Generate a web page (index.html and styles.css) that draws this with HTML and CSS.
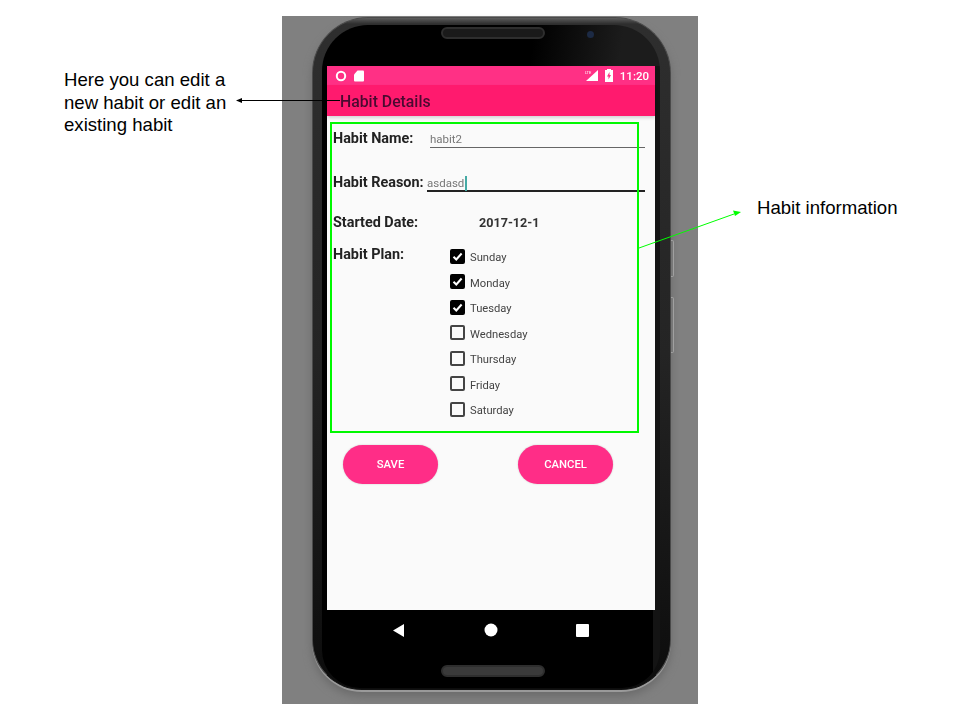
FILE: index.html
```html
<html>
  <head>
    <link rel="stylesheet" href="styles.css">
  </head>
  <body>
    <div class="shot">
      <div class="phone">
        <div class="bezel">
          <div class="speaker"></div>
          <div class="camera"></div>
          <div class="screen">
            <div class="statusbar">
              <svg class="st-left" width="30" height="14" viewBox="0 0 30 14">
                <circle cx="6" cy="7" r="4.2" fill="none" stroke="#fff" stroke-width="2"/>
                <path d="M23 2h5.500a1 1 0 0 1 1 1v9a1 1 0 0 1-1 1h-8a1 1 0 0 1-1-1V6z" fill="#fff" transform="translate(-0.500 -0.500)"/>
              </svg>
              <div class="st-right">
                <svg width="15" height="13" viewBox="0 0 15 13">
                  <path d="M14 1v11H2z" fill="#fff"/>
                  <path d="M1 1h8v4H1z" fill="#ff3085"/>
                  <text x="1" y="5" class="st-lte">LTE</text>
                </svg>
                <svg width="8" height="13" viewBox="0 0 8 13">
                  <path d="M2 1V0h4v1h2v12H0V1z" fill="#fff"/>
                  <path d="M4.500 3 2 7.500h1.500V10.500L6 6H4.500z" fill="#ff3085"/>
                </svg>
                <span class="clock">11:20</span>
              </div>
            </div>
            <div class="toolbar">Habit Details</div>
            <div class="row row-name">
              <div class="label">Habit Name:</div>
              <div class="field">habit2</div>
            </div>
            <div class="row row-reason">
              <div class="label">Habit Reason:</div>
              <div class="field active">asdasd<span class="cursor"></span></div>
            </div>
            <div class="row row-date">
              <div class="label">Started Date:</div>
              <div class="date">2017-12-1</div>
            </div>
            <div class="row row-plan">
              <div class="label">Habit Plan:</div>
              <div class="days">
                <div class="day"><span class="box on"><svg width="11" height="11" viewBox="0 0 11 11"><path d="M1.500 5.700l2.800 2.800 5.300-6" fill="none" stroke="#fff" stroke-width="2"/></svg></span>Sunday</div>
                <div class="day"><span class="box on"><svg width="11" height="11" viewBox="0 0 11 11"><path d="M1.500 5.700l2.800 2.800 5.300-6" fill="none" stroke="#fff" stroke-width="2"/></svg></span>Monday</div>
                <div class="day"><span class="box on"><svg width="11" height="11" viewBox="0 0 11 11"><path d="M1.500 5.700l2.800 2.800 5.300-6" fill="none" stroke="#fff" stroke-width="2"/></svg></span>Tuesday</div>
                <div class="day"><span class="box"></span>Wednesday</div>
                <div class="day"><span class="box"></span>Thursday</div>
                <div class="day"><span class="box"></span>Friday</div>
                <div class="day"><span class="box"></span>Saturday</div>
              </div>
            </div>
            <div class="buttons">
              <div class="btn">SAVE</div>
              <div class="btn">CANCEL</div>
            </div>
            <div class="greenbox"></div>
          </div>
          <div class="navbar">
            <svg width="13" height="15" viewBox="0 0 13 15"><path d="M12 1v13L1 7.500z" fill="#fff"/></svg>
            <svg width="14" height="14" viewBox="0 0 14 14"><circle cx="7" cy="7" r="6.500" fill="#fff"/></svg>
            <svg width="13" height="13" viewBox="0 0 13 13"><rect width="13" height="13" rx="1" fill="#fff"/></svg>
          </div>
          <div class="speaker bottom"></div>
        </div>
        <div class="sidekey key1"></div>
        <div class="sidekey key2"></div>
      </div>
    </div>

    <div class="note note-left">Here you can edit a<br>new habit or edit an<br>existing habit</div>
    <div class="note note-right">Habit information</div>

    <svg class="arrows" width="960" height="720" viewBox="0 0 960 720">
      <path d="M340 100.500H241" stroke="#000" stroke-width="1.200"/>
      <path d="M236 100.500l6-2.500v5z" fill="#000"/>
      <path d="M639 248 L734 214" stroke="#00ff00" stroke-width="1"/>
      <path d="M741 212l-8-1.500 2 5.500z" fill="#00ff00"/>
    </svg>
  </body>
</html>
```

FILE: styles.css
```css
*{
  box-sizing: border-box;
}
body{
  margin: 0px;
  width: 960px;
  height: 720px;
  position: relative;
  overflow: hidden;
  background: #fff;
  font-family: "Roboto", sans-serif;
}
.shot{
  margin-left: 282px;
  margin-top: 16px;
  width: 416px;
  height: 688px;
  padding: 1px 0px 0px 30px;
  background: #808080;
  float: left;
}
.phone{
  position: relative;
  width: 359px;
  height: 673px;
  padding: 7px 10px 2px 9px;
  border-radius: 56px 56px 50px 50px;
  background: linear-gradient(180deg, #5c5c5c 0px, #2e2e2e 6px, #242424 50%, #0c0c0c 100%);
  border: 1px solid #4a4a4a;
  border-bottom-color: #111;
  box-shadow: 0 2px 0 #9a9a9a, 0 6px 8px #6a6a6a;
  filter: blur(0.35px);
}
.bezel{
  position: relative;
  width: 338px;
  height: 663px;
  padding: 2px 5px 0px 5px;
  border-radius: 46px 46px 38px 38px;
  background:
    linear-gradient(98deg, #000 62%, #1c1c1c 88%) 0 0 / 100% 41px no-repeat,
    linear-gradient(90deg, #000 98%, #141414 98%);
}
.speaker{
  width: 104px;
  height: 12px;
  margin: 0px 0px 27px 114px;
  border-radius: 6px;
  background: #1a1a1a;
  border: 2px solid #2e2e2e;
}
.speaker.bottom{
  margin: 15px 0px 0px 114px;
  background: #3a3a3a;
}
.camera{
  position: absolute;
  left: 265px;
  top: 6px;
  width: 7px;
  height: 7px;
  border-radius: 50%;
  background: #1c2a44;
}
.screen{
  position: relative;
  width: 328px;
  height: 544px;
  background: #fafafa;
}
.statusbar{
  height: 19px;
  padding: 0px 6px 0px 8px;
  background: #ff3085;
  display: flex;
  justify-content: space-between;
  align-items: center;
  color: #fff;
}
.st-right{
  display: flex;
  align-items: center;
  gap: 6px;
}
.st-lte{
  font-size: 4px;
  fill: #fff;
}
.clock{
  font-size: 11.500px;
  font-weight: 500;
  margin-left: 1px;
}
.toolbar{
  height: 31px;
  padding-left: 13px;
  background: #ff1a6e;
  box-shadow: 0 2px 3px rgba(0,0,0,.15);
  color: #4a0a30;
  font-size: 15.800px;
  font-weight: 500;
  line-height: 33px;
}
.row{
  display: flex;
  padding-left: 6px;
  color: #222;
}
.label{
  font-size: 14.400px;
  font-weight: 700;
  line-height: 20px;
}
.row-name{
  margin-top: 13px;
  height: 19px;
}
.row-name .label{
  width: 97px;
}
.row-reason{
  margin-top: 25px;
  height: 19px;
}
.row-reason .label{
  width: 94px;
}
.field{
  width: 215px;
  height: 19px;
  padding-top: 3px;
  border-bottom: 1px solid #666;
  color: #777;
  font-size: 11.500px;
  line-height: 15px;
  white-space: nowrap;
}
.active{
  width: 218px;
  border-bottom: 2px solid #222;
}
.cursor{
  display: inline-block;
  width: 2px;
  height: 15px;
  margin-left: 1px;
  vertical-align: top;
  background: #45aaa5;
}
.row-date{
  margin-top: 21px;
  height: 18px;
}
.row-date .label{
  width: 146px;
}
.date{
  color: #333;
  font-size: 12.600px;
  font-weight: 700;
  line-height: 20px;
}
.row-plan{
  margin-top: 13px;
}
.row-plan .label{
  width: 117px;
  line-height: 21px;
}
.day{
  display: flex;
  align-items: center;
  height: 25.500px;
  padding-top: 1.500px;
  color: #444;
  font-size: 11.200px;
}
.box{
  width: 15px;
  height: 15px;
  margin-top: -2.500px;
  margin-right: 5px;
  border: 2px solid #444;
  border-radius: 2px;
  display: flex;
  align-items: center;
  justify-content: center;
}
.box.on{
  background: #000;
  border-color: #000;
}
.buttons{
  display: flex;
  gap: 80px;
  margin: 22px 0px 0px 16px;
}
.btn{
  width: 95px;
  height: 39px;
  border-radius: 20px;
  background: #ff2d87;
  box-shadow: 0 0 2px rgba(0,0,0,.2);
  color: #fff;
  font-size: 11.300px;
  font-weight: 500;
  line-height: 39px;
  text-align: center;
}
.greenbox{
  position: absolute;
  left: 3px;
  top: 56px;
  width: 309px;
  height: 311px;
  border: 2px solid #00f800;
}
.navbar{
  height: 40px;
  padding-left: 65px;
  display: flex;
  align-items: center;
  gap: 78.500px;
}
.sidekey{
  position: absolute;
  left: 358px;
  width: 3px;
  border: 1px solid #a0a0a0;
  border-left: 0px;
  border-radius: 0px 2px 2px 0px;
}
.key1{
  top: 222px;
  height: 37px;
}
.key2{
  top: 279px;
  height: 56px;
}
.note{
  position: absolute;
  color: #000;
  font-family: "Liberation Sans", sans-serif;
  font-size: 18.600px;
  line-height: 22.500px;
}
.note-left{
  left: 64px;
  top: 69px;
}
.note-right{
  left: 757px;
  top: 197px;
}
.arrows{
  position: absolute;
  left: 0px;
  top: 0px;
}
```
